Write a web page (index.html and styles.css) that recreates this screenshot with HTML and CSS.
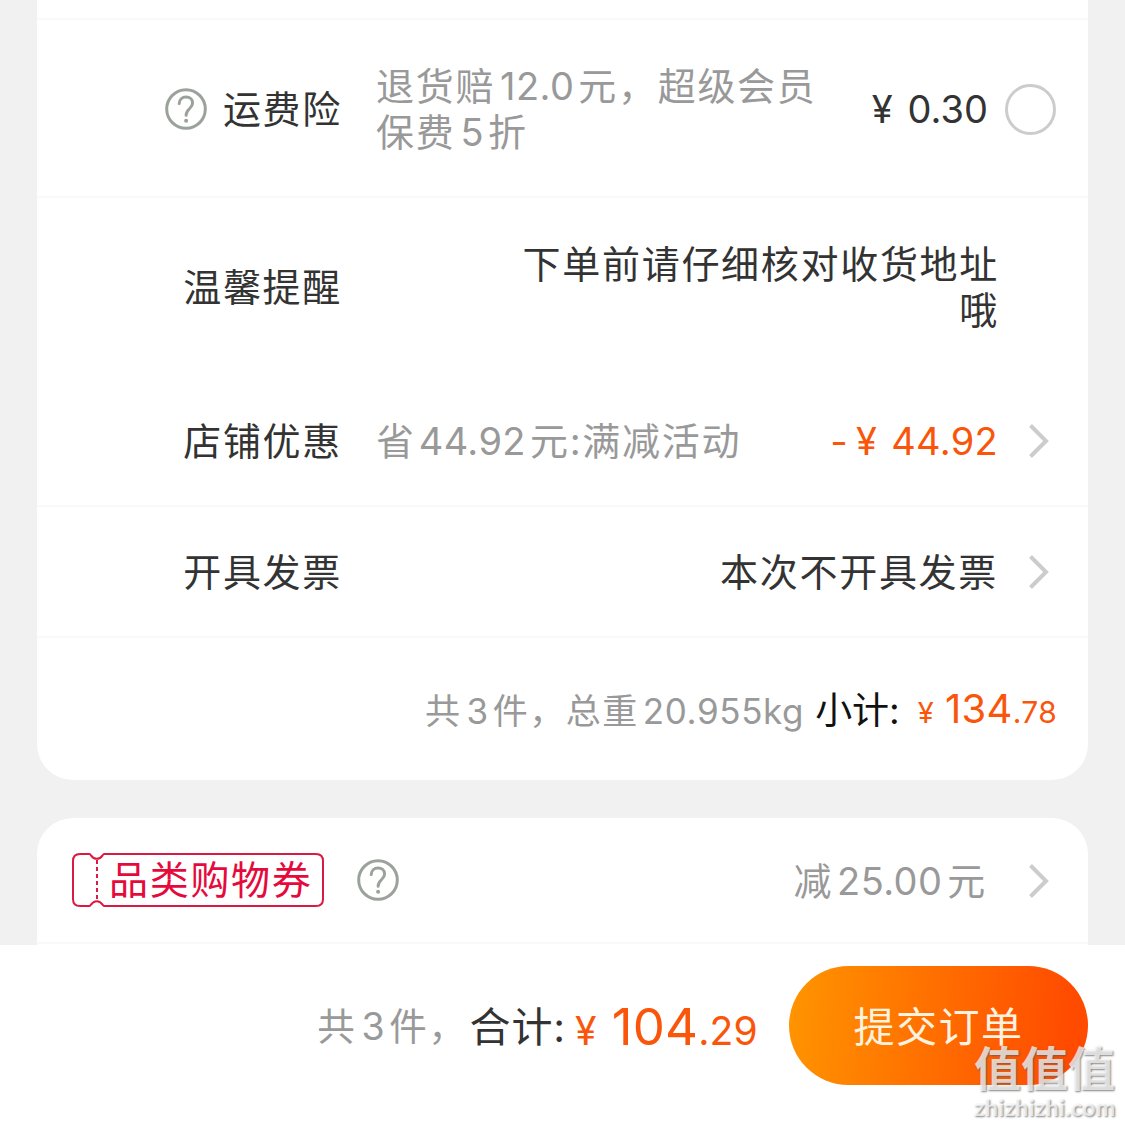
FILE: index.html
```html
<!DOCTYPE html>
<html lang="zh-CN">
<head>
<meta charset="utf-8">
<title>确认订单</title>
<link rel="stylesheet" href="styles.css">
</head>
<body>
<main class="content">
  <section class="card order">
    <div class="row row-prev"></div>
    <div class="row row-insurance">
      <div class="label">
        <svg class="help" viewBox="0 0 42 42"><circle cx="21" cy="21" r="19.3"/><path d="M14.2 15.600c.2-4.200 3-6.500 6.800-6.500 3.900 0 6.600 2.400 6.600 5.900 0 5.900-6.500 5.700-6.500 12.200"/><circle class="dot" cx="21.100" cy="32.800" r="2"/></svg>
        <span>运费险</span>
      </div>
      <p class="desc">退货赔<span class="num">12.0</span>元，超级会员<br>保费<span class="num">5</span>折</p>
      <span class="amount"><span class="yen">¥</span>0.30</span>
      <span class="radio"></span>
    </div>
    <div class="row row-tip">
      <div class="label">温馨提醒</div>
      <p class="value tip">下单前请仔细核对收货地址<br>哦</p>
    </div>
    <div class="row row-discount">
      <div class="label">店铺优惠</div>
      <p class="desc">省<span class="num save">44.92</span>元:满减活动</p>
      <span class="value price discount">-<span class="yen">¥</span>44.92</span>
      <svg class="chevron" viewBox="0 0 22 36"><path d="M2.500 2.500 18 18 2.500 33.500"/></svg>
    </div>
    <div class="row row-invoice">
      <div class="label">开具发票</div>
      <p class="value">本次不开具发票</p>
      <svg class="chevron" viewBox="0 0 22 36"><path d="M2.500 2.500 18 18 2.500 33.500"/></svg>
    </div>
    <div class="row row-subtotal">
      <span class="muted">共<span class="num">3</span>件，总重<span class="num weight">20.955kg</span></span>
      <span class="subtotal">小计:</span>
      <span class="price sum"><small class="yen">¥</small>134<small>.78</small></span>
    </div>
  </section>
  <section class="card coupon">
    <div class="row row-coupon">
      <div class="ticket">
        <svg class="ticket-frame" viewBox="0 0 252 54"><path d="M8 1H17.500C19 1 19.500 5.800 24.800 5.800S30.500 1 32 1H244Q251 1 251 8V46Q251 53 244 53H32C30.500 53 30 48.200 24.800 48.200S19 53 17.500 53H8Q1 53 1 46V8Q1 1 8 1Z"/><path class="perforation" d="M25 7V48"/></svg>
        <span>品类购物券</span>
      </div>
      <svg class="help" viewBox="0 0 42 42"><circle cx="21" cy="21" r="19.3"/><path d="M14.2 15.600c.2-4.200 3-6.500 6.800-6.500 3.900 0 6.600 2.400 6.600 5.900 0 5.900-6.500 5.700-6.500 12.200"/><circle class="dot" cx="21.100" cy="32.800" r="2"/></svg>
      <span class="reduction">减<span class="num">25.00</span>元</span>
      <svg class="chevron" viewBox="0 0 22 36"><path d="M2.500 2.500 18 18 2.500 33.500"/></svg>
    </div>
  </section>
</main>
<footer class="checkout">
  <span class="muted">共<span class="num">3</span>件，</span>
  <span class="total-label">合计:</span>
  <span class="price total"><small class="yen">¥</small>104<small>.29</small></span>
  <button class="submit">提交订单</button>
</footer>
<div class="watermark"><span class="mark">值值值</span><span class="site">zhizhizhi.com</span></div>
</body>
</html>
```

FILE: styles.css
```css
* { box-sizing: border-box; }

body {
  margin: 0;
  width: 1125px;
  height: 1125px;
  overflow: hidden;
  position: relative;
  display: flex;
  flex-direction: column;
  background: #f1f1f1;
  color: #333;
  font: 38px/46px Inter, "Noto Sans CJK SC", sans-serif;
  letter-spacing: 1.7px;
  white-space: nowrap;
}

p { margin: 0; }
svg { display: block; fill: none; flex: none; }

.content { height: 945px; padding: 0 37px; overflow: hidden; }
.card { background: #fff; }
.order { height: 780px; border-radius: 0 0 36px 36px; }
.coupon { height: 160px; margin-top: 38px; border-radius: 36px 36px 0 0; }

.row { display: flex; align-items: center; border-bottom: 2px solid #f9f9f9; }
.row-prev { height: 20px; }
.row-insurance { height: 178px; padding: 2px 32px 0 0; }
.row-tip { height: 177px; padding-right: 89px; border-bottom: 0; }
.row-discount { height: 132px; padding: 2px 38px 0 0; }
.row-invoice { height: 131px; padding-right: 38px; }
.row-subtotal { height: 142px; padding: 3px 31px 0 0; justify-content: flex-end; border-bottom: 0; }
.row-coupon { height: 126px; padding: 0 38px 0 35px; }

.label { width: 305px; flex: none; display: flex; justify-content: flex-end; align-items: center; gap: 16px; }
.desc { margin-left: 34px; color: #999; }
.value { margin-left: auto; text-align: right; }
.num { margin: 0 4px 0 5px; letter-spacing: 0.4px; }
.save { margin-left: 3px; }
.muted, .reduction { color: #999; }
.price { color: #f9560b; letter-spacing: 0.3px; }

.help { width: 42px; height: 42px; stroke: #9aa29b; stroke-width: 3; stroke-linecap: round; }
.help .dot { fill: #9aa29b; stroke: none; }
.chevron { width: 22px; height: 36px; margin-left: 30px; stroke: #ccc; stroke-width: 4; }

.amount { margin-left: auto; letter-spacing: 0; }
.amount .yen { margin-right: 15px; }
.discount .yen { margin: 0 14px 0 8px; }
.radio { width: 51px; height: 51px; margin-left: 17px; border: 3px solid #ccc; border-radius: 50%; }

.row-subtotal .muted { font-size: 35px; letter-spacing: 1.5px; }
.row-subtotal .num { letter-spacing: 0.6px; }
.row-subtotal .weight { margin: 0 4px; }
.subtotal { margin-left: 7px; color: #111; font-size: 37px; letter-spacing: 0; }
.sum { margin-left: 18px; font-size: 40px; }
.price small { font-size: 30px; }
.sum .yen { margin-right: 11px; font-size: 29px; }

.ticket { position: relative; width: 252px; height: 54px; padding-left: 37px; color: #e6093c; font-size: 39px; line-height: 54px; }
.ticket-frame { position: absolute; inset: 0; width: 252px; height: 54px; stroke: #d91a43; stroke-width: 2; }
.perforation { stroke-dasharray: 4 3; }
.ticket + .help { margin-left: 33px; }
.reduction { margin-left: auto; padding-top: 2px; }
.reduction .num { margin: 0 5px 0 4px; }
.row-coupon .chevron { margin-left: 41px; position: relative; top: 1px; }

.checkout { height: 180px; padding: 0 37px 19px 0; display: flex; align-items: center; justify-content: flex-end; background: #fff; }
.checkout .muted { padding-top: 3px; font-size: 37.500px; }
.total-label { margin-left: 2px; padding-top: 2px; font-size: 41px; letter-spacing: 0.9px; }
.total { margin-left: 9px; padding-top: 6px; font-size: 51px; letter-spacing: 0.2px; }
.total small { font-size: 39px; }
.total .yen { margin-right: 15px; font-size: 39px; }
.submit {
  width: 299px;
  height: 119px;
  margin-left: 31px;
  padding: 0;
  border: 0;
  border-radius: 60px;
  background: linear-gradient(96deg, #ff9500, #ff4b00 92%);
  color: #fff3e0;
  font: 41px/123px Inter, "Noto Sans CJK SC", sans-serif;
  letter-spacing: 1.5px;
}

.watermark {
  position: absolute;
  left: 974px;
  top: 1039px;
  display: flex;
  flex-direction: column;
  color: rgba(255, 255, 255, 0.72);
  text-shadow: 1px 1px 2px rgba(90, 90, 90, 0.75);
}
.mark { font: 700 47px/54px "Noto Sans CJK SC", sans-serif; letter-spacing: 0; }
.site { font: 700 23px/28px Lato, sans-serif; letter-spacing: 0.35px; }
```
